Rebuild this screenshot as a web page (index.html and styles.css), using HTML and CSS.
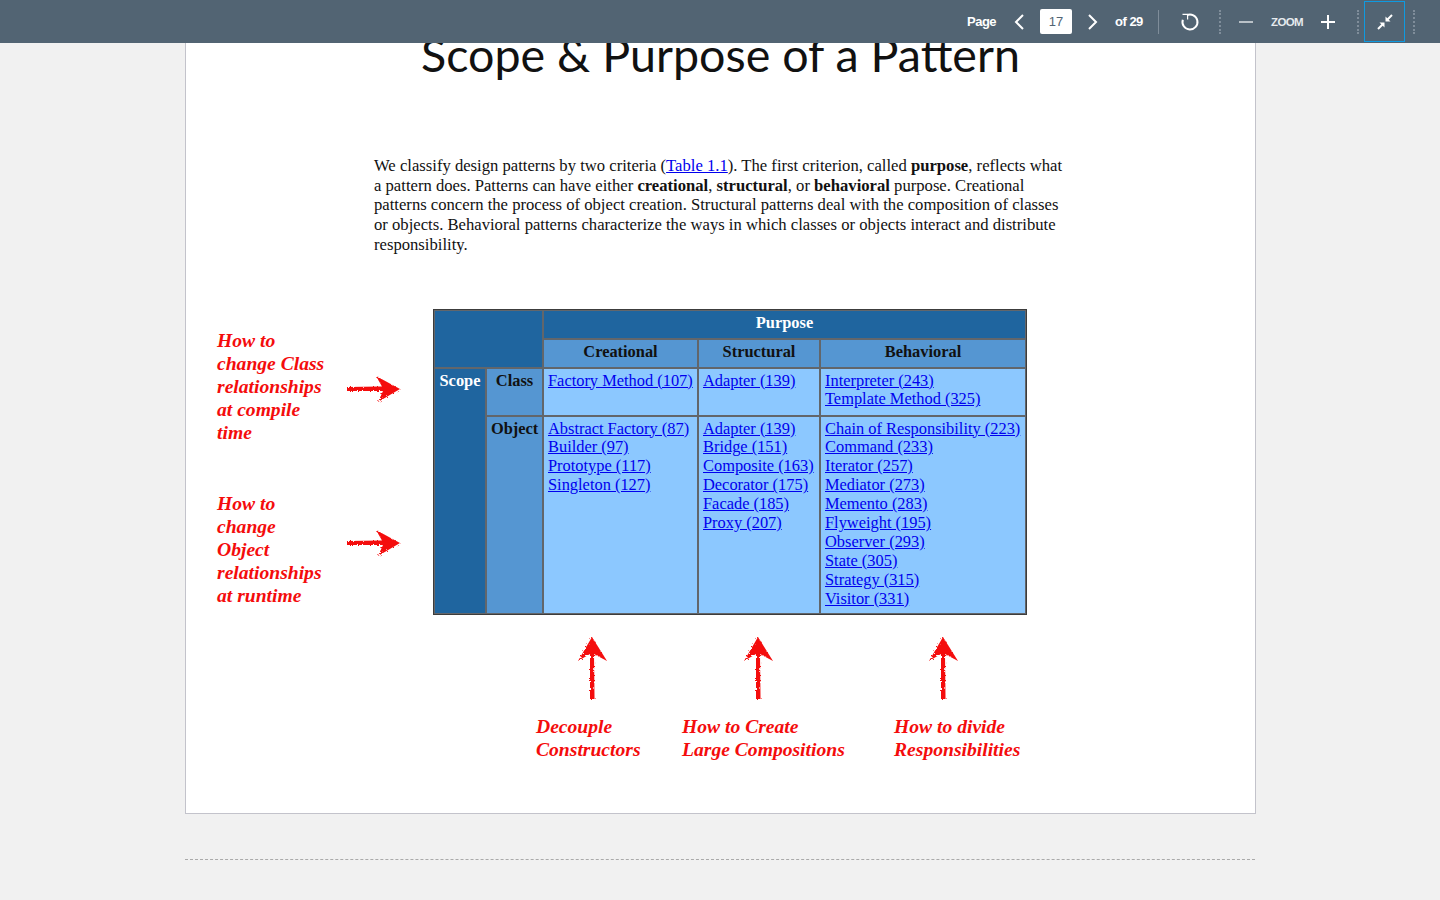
FILE: index.html
```html
<!DOCTYPE html>
<html lang="en">
<head>
    <title>Scope and Purpose of a Pattern</title>
    <link rel="stylesheet" href="styles.css">
</head>
<body>
    <div class="toolbar">
        <span class="tool-label page-label">Page</span>
        <button class="icon-btn prev-btn">
            <svg width="12" height="18" viewBox="0 0 12 18"><path d="M10 2 L3 9 L10 16" class="line"/></svg>
        </button>
        <input class="page-input" type="text" value="17">
        <button class="icon-btn next-btn">
            <svg width="12" height="18" viewBox="0 0 12 18"><path d="M2 2 L9 9 L2 16" class="line"/></svg>
        </button>
        <span class="tool-label of-label">of 29</span>
        <span class="sep sep-solid"></span>
        <button class="icon-btn rotate-btn">
            <svg width="20" height="20" viewBox="0 0 20 20"><path d="M6.8 3.2 A7.5 7.5 0 1 1 2.8 7.8" class="line"/><path d="M2.5 2.4 H7.6 V7.5" class="line thin"/></svg>
        </button>
        <span class="sep sep-one"></span>
        <button class="icon-btn minus-btn">
            <svg width="14" height="14" viewBox="0 0 14 14"><path d="M0 7 H14" class="line thin"/></svg>
        </button>
        <span class="zoom-label">ZOOM</span>
        <button class="icon-btn plus-btn">
            <svg width="14" height="14" viewBox="0 0 14 14"><path d="M0 7 H14 M7 0 V14" class="line"/></svg>
        </button>
        <span class="sep sep-two"></span>
        <button class="collapse-btn">
            <svg width="16" height="16" viewBox="0 0 16 16">
                <path d="M15 1 L10 6" class="line"/><path d="M8.5 2.5 V7.5 H13.5 Z" class="solid"/>
                <path d="M1 15 L6 10" class="line"/><path d="M2.5 8.5 H7.5 V13.5 Z" class="solid"/>
            </svg>
        </button>
        <span class="sep sep-three"></span>
    </div>

    <div class="slide">
        <h1 class="slide-title">Scope &amp; Purpose of a Pattern</h1>

        <p class="intro">We classify design patterns by two criteria (<a href="#">Table 1.1</a>). The first criterion, called <b>purpose</b>, reflects what a pattern does. Patterns can have either <b>creational</b>, <b>structural</b>, or <b>behavioral</b> purpose. Creational patterns concern the process of object creation. Structural patterns deal with the composition of classes or objects. Behavioral patterns characterize the ways in which classes or objects interact and distribute responsibility.</p>

        <table class="patterns">
            <colgroup>
                <col class="col-scope">
                <col class="col-kind">
                <col class="col-creational">
                <col class="col-structural">
                <col class="col-behavioral">
            </colgroup>
            <tr class="row-head">
                <td class="dark" colspan="2" rowspan="2"></td>
                <th class="dark" colspan="3">Purpose</th>
            </tr>
            <tr class="row-head">
                <th class="mid">Creational</th>
                <th class="mid">Structural</th>
                <th class="mid">Behavioral</th>
            </tr>
            <tr class="row-class">
                <th class="dark" rowspan="2">Scope</th>
                <th class="mid">Class</th>
                <td><a href="#">Factory Method (107)</a></td>
                <td><a href="#">Adapter (139)</a></td>
                <td><a href="#">Interpreter (243)</a><br><a href="#">Template Method (325)</a></td>
            </tr>
            <tr class="row-object">
                <th class="mid">Object</th>
                <td><a href="#">Abstract Factory (87)</a><br><a href="#">Builder (97)</a><br><a href="#">Prototype (117)</a><br><a href="#">Singleton (127)</a></td>
                <td><a href="#">Adapter (139)</a><br><a href="#">Bridge (151)</a><br><a href="#">Composite (163)</a><br><a href="#">Decorator (175)</a><br><a href="#">Facade (185)</a><br><a href="#">Proxy (207)</a></td>
                <td><a href="#">Chain of Responsibility (223)</a><br><a href="#">Command (233)</a><br><a href="#">Iterator (257)</a><br><a href="#">Mediator (273)</a><br><a href="#">Memento (283)</a><br><a href="#">Flyweight (195)</a><br><a href="#">Observer (293)</a><br><a href="#">State (305)</a><br><a href="#">Strategy (315)</a><br><a href="#">Visitor (331)</a></td>
            </tr>
        </table>

        <!-- hand written notes on the slide -->
        <div class="note note-class">How to<br>change Class<br>relationships<br>at compile<br>time</div>
        <div class="note note-object">How to<br>change<br>Object<br>relationships<br>at runtime</div>
        <div class="note note-decouple">Decouple<br>Constructors</div>
        <div class="note note-large">How to Create<br>Large Compositions</div>
        <div class="note note-divide">How to divide<br>Responsibilities</div>

        <svg class="arrow arrow-r1" width="56" height="32" viewBox="0 0 56 32"><path d="M1 14 L36 13.5 L30 3 L54 16 L32 29 L37 18 L1 18 Z"/></svg>
        <svg class="arrow arrow-r2" width="56" height="32" viewBox="0 0 56 32"><path d="M1 14 L36 13.5 L30 3 L54 16 L32 29 L37 18 L1 18 Z"/></svg>
        <svg class="arrow arrow-u1" width="32" height="66" viewBox="0 0 32 66"><path d="M15 2 L30 26 L17 19 L17.5 64 L13 64 L13 19 L1 26 Z"/></svg>
        <svg class="arrow arrow-u2" width="32" height="66" viewBox="0 0 32 66"><path d="M15 2 L30 26 L17 19 L17.5 64 L13 64 L13 19 L1 26 Z"/></svg>
        <svg class="arrow arrow-u3" width="32" height="66" viewBox="0 0 32 66"><path d="M15 2 L30 26 L17 19 L17.5 64 L13 64 L13 19 L1 26 Z"/></svg>
    </div>

    <div class="page-rule"></div>

    <!-- crayon edge for the arrows -->
    <svg class="defs" width="0" height="0">
        <filter id="crayon" x="-10%" y="-10%" width="120%" height="120%">
            <feTurbulence type="fractalNoise" baseFrequency="0.45" numOctaves="2" seed="4"/>
            <feDisplacementMap in="SourceGraphic" scale="3"/>
        </filter>
    </svg>
</body>
</html>
```

FILE: styles.css
```css
body {
    margin: 0;
    height: 900px;
    overflow: hidden;
    background-color: #f1f1f1;
}

/* toolbar */
.toolbar {
    position: fixed;
    top: 0;
    left: 0;
    right: 0;
    z-index: 5;
    height: 43px;
    display: flex;
    align-items: center;
    background-color: #526473;
    color: white;
    font-family: "Liberation Sans", sans-serif;
    padding-left: 967px;
    box-sizing: border-box;
}
.tool-label {
    font-size: 13px;
    font-weight: bold;
    letter-spacing: -0.5px;
}
.page-label {
    width: 29px;
}
.icon-btn {
    background: none;
    border: none;
    padding: 0;
    display: flex;
    align-items: center;
    justify-content: center;
}
.line {
    fill: none;
    stroke: white;
    stroke-width: 2;
}
.thin {
    stroke-width: 1.2;
}
.solid {
    fill: white;
}
.prev-btn {
    width: 12px;
    margin-left: 17px;
}
.page-input {
    width: 32px;
    height: 25px;
    margin-left: 15px;
    padding: 0;
    border: none;
    border-radius: 2px;
    background-color: white;
    color: #526473;
    text-align: center;
    font-family: "Liberation Sans", sans-serif;
    font-size: 13px;
}
.next-btn {
    width: 12px;
    margin-left: 15px;
}
.of-label {
    width: 30px;
    margin-left: 16px;
    white-space: nowrap;
}
.sep {
    width: 0;
    height: 24px;
    border-left: 2px dotted #7f8d9a;
}
.sep-solid {
    margin-left: 13px;
    border-left-width: 1px;
    border-left-style: solid;
}
.rotate-btn {
    width: 20px;
    margin-left: 21px;
}
.sep-one {
    margin-left: 19px;
}
.minus-btn {
    width: 14px;
    margin-left: 18px;
}
.zoom-label {
    width: 34px;
    margin-left: 18px;
    font-size: 11.5px;
    font-weight: bold;
    letter-spacing: -0.6px;
    color: #e6eaee;
}
.plus-btn {
    width: 14px;
    margin-left: 16px;
}
.sep-two {
    margin-left: 22px;
}
.collapse-btn {
    width: 41px;
    height: 41px;
    margin-left: 5px;
    padding: 0;
    background: none;
    border: 1px solid #0f9ae0;
    box-sizing: border-box;
    display: flex;
    align-items: center;
    justify-content: center;
}
.sep-three {
    margin-left: 8px;
}

/* slide */
.slide {
    position: relative;
    width: 1071px;
    height: 814px;
    margin-left: 185px;
    box-sizing: border-box;
    background-color: white;
    border: 1px solid #c3c3cb;
    overflow: hidden;
    font-family: "Liberation Serif", serif;
}
.slide-title {
    margin: 25px 0 0;
    text-align: center;
    font-family: Lato, sans-serif;
    font-weight: normal;
    font-size: 46.6px;
    line-height: 56px;
    color: #111;
}
.intro {
    width: 692px;
    margin: 74px 0 0 188px;
    font-size: 16.65px;
    line-height: 19.7px;
    color: #111;
}
.intro a,
.patterns a {
    color: #0000ee;
}

/* table */
.patterns {
    width: 592px;
    margin: 54px 0 0 247px;
    border-collapse: collapse;
    table-layout: fixed;
    font-size: 16.4px;
    line-height: 18.9px;
    background-color: #8cc8ff;
    outline: 1px solid #3c3c3c;
    outline-offset: -1px;
}
.patterns td,
.patterns th {
    border: 2px solid #62666b;
    padding: 3px 4px 0;
    vertical-align: top;
    text-align: left;
    white-space: nowrap;
}
.patterns th {
    text-align: center;
    color: #111;
}
.col-scope {
    width: 52px;
}
.col-kind {
    width: 57px;
}
.col-creational {
    width: 155px;
}
.col-structural {
    width: 122px;
}
.col-behavioral {
    width: 206px;
}
.row-head {
    height: 29px;
}
.row-head th {
    vertical-align: middle;
    padding: 0 0 2px;
}
.row-class {
    height: 48px;
}
.row-object {
    height: 198px;
}
.patterns .dark {
    background-color: #1f659f;
    color: white;
}
.patterns .mid {
    background-color: #5596d2;
}

/* notes */
.note {
    position: absolute;
    font-family: "Liberation Serif", serif;
    font-style: italic;
    font-weight: bold;
    font-size: 19.6px;
    line-height: 23px;
    color: #f40c0c;
    white-space: nowrap;
}
.note-class {
    left: 31px;
    top: 328px;
}
.note-object {
    left: 31px;
    top: 491px;
}
.note-decouple {
    left: 350px;
    top: 714px;
}
.note-large {
    left: 496px;
    top: 714px;
}
.note-divide {
    left: 708px;
    top: 714px;
}
.arrow {
    position: absolute;
    fill: #f40c0c;
    filter: url(#crayon);
}
.arrow-r1 {
    left: 160px;
    top: 372px;
}
.arrow-r2 {
    left: 160px;
    top: 526px;
}
.arrow-u1 {
    left: 391px;
    top: 634px;
}
.arrow-u2 {
    left: 557px;
    top: 634px;
}
.arrow-u3 {
    left: 742px;
    top: 634px;
}

.page-rule {
    width: 1070px;
    margin: 45px 0 0 185px;
    border-top: 1px dashed #aaa;
}
.defs {
    position: absolute;
}
```
